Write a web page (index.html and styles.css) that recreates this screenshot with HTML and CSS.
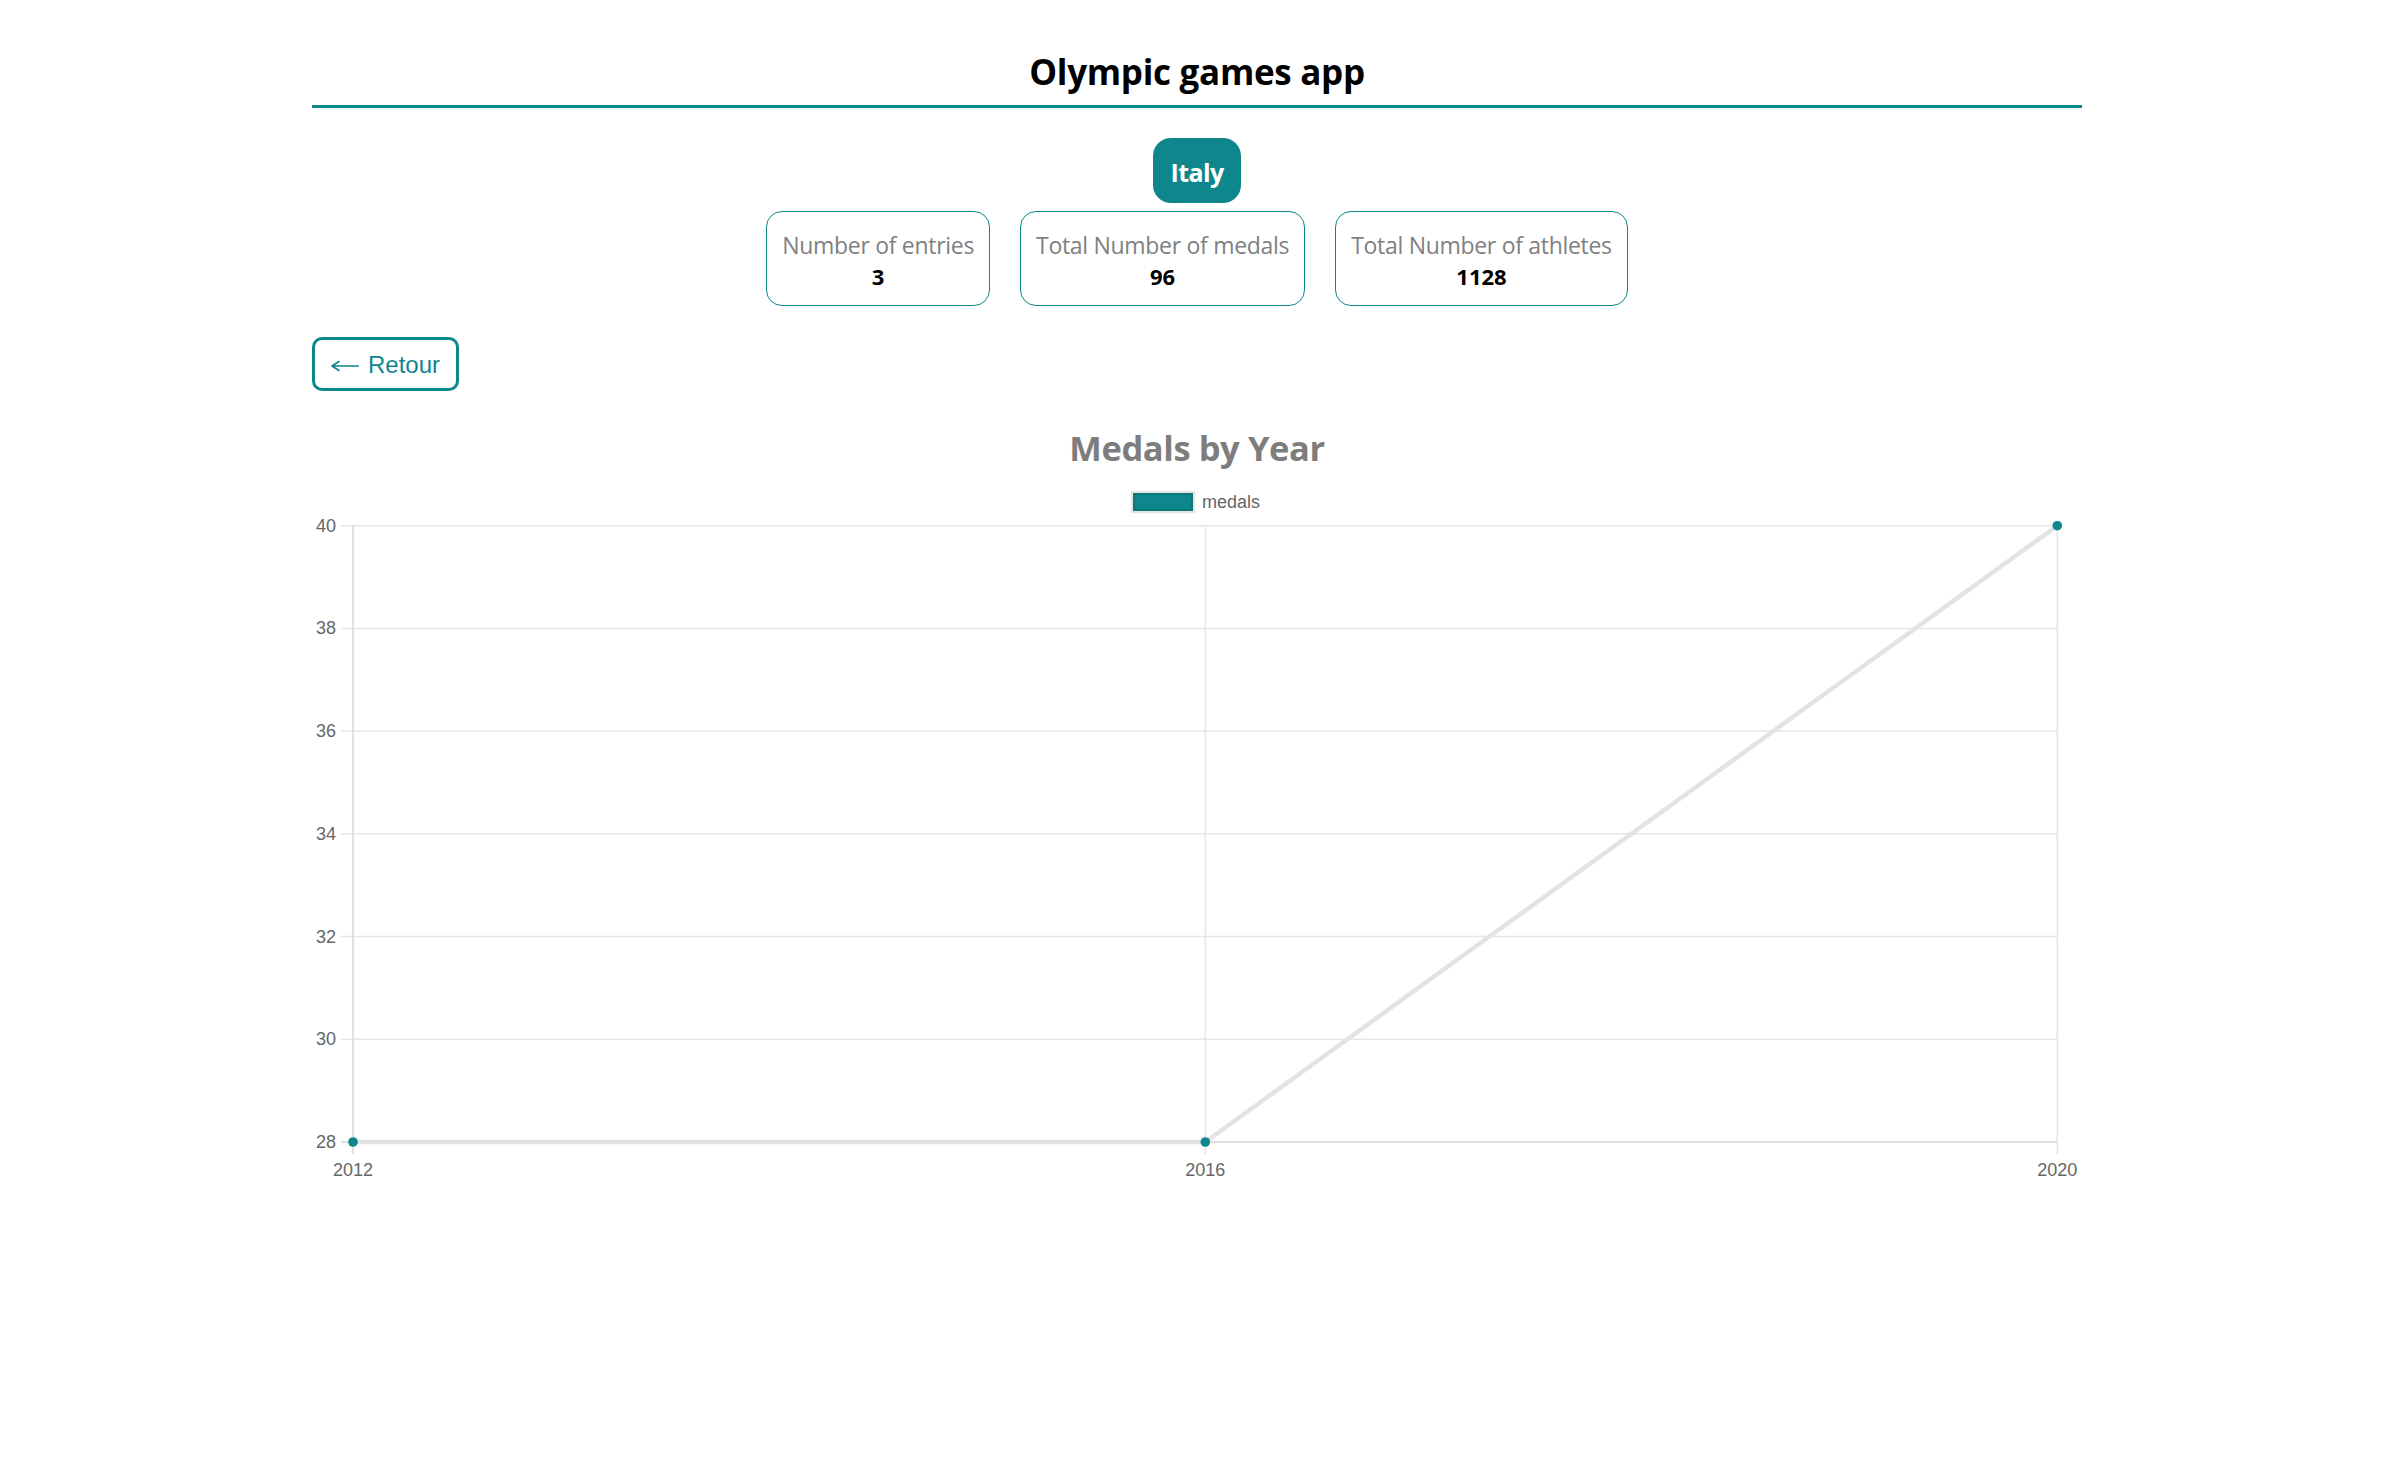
FILE: index.html
```html
<!DOCTYPE html>
<html lang="en">
<head>
<meta charset="utf-8">
<title>Olympic games app</title>
<link rel="stylesheet" href="styles.css">
</head>
<body>
<div class="page">
  <header class="app-header">
    <h1 class="app-title">Olympic games app</h1>
  </header>

  <section class="country">
    <div class="country-badge">Italy</div>
    <div class="stats">
      <div class="stat-card">
        <div class="stat-label">Number of entries</div>
        <div class="stat-value">3</div>
      </div>
      <div class="stat-card">
        <div class="stat-label">Total Number of medals</div>
        <div class="stat-value">96</div>
      </div>
      <div class="stat-card">
        <div class="stat-label">Total Number of athletes</div>
        <div class="stat-value">1128</div>
      </div>
    </div>
  </section>

  <div class="actions">
    <button class="back-btn" type="button" aria-label="← Retour">
      <svg class="back-arrow" width="28" height="12" viewBox="0 0 28 12" aria-hidden="true">
        <path d="M1 6H28M1 6L8 1.5M1 6L8 10.5"></path>
      </svg>
      <span class="back-text">Retour</span>
    </button>
  </div>

  <section class="chart-section">
    <h2 class="chart-title">Medals by Year</h2>
    <svg class="chart" width="1770" height="720" viewBox="0 0 1770 720">
      <rect class="legend-box" x="821" y="22" width="60" height="18"></rect>
      <text class="legend-text" x="890" y="31">medals</text>

      <g class="grid">
        <line x1="29" y1="54.7" x2="1745.3" y2="54.7"></line>
        <line x1="29" y1="157.4" x2="1745.3" y2="157.4"></line>
        <line x1="29" y1="260.1" x2="1745.3" y2="260.1"></line>
        <line x1="29" y1="362.8" x2="1745.3" y2="362.8"></line>
        <line x1="29" y1="465.5" x2="1745.3" y2="465.5"></line>
        <line x1="29" y1="568.2" x2="1745.3" y2="568.2"></line>
        <line x1="893.3" y1="54.7" x2="893.3" y2="683"></line>
        <line x1="1745.3" y1="54.7" x2="1745.3" y2="683"></line>
      </g>
      <g class="axis">
        <line x1="41" y1="54.7" x2="41" y2="683"></line>
        <line x1="29" y1="671" x2="1745.3" y2="671"></line>
      </g>

      <g class="ytick">
        <text x="24" y="54.7">40</text>
        <text x="24" y="157.4">38</text>
        <text x="24" y="260.1">36</text>
        <text x="24" y="362.8">34</text>
        <text x="24" y="465.5">32</text>
        <text x="24" y="568.2">30</text>
        <text x="24" y="671">28</text>
      </g>

      <g class="xtick">
        <text x="41" y="705">2012</text>
        <text x="893.3" y="705">2016</text>
        <text x="1745.3" y="705">2020</text>
      </g>

      <polyline class="data-line" points="41,671 893.3,671 1745.3,54.7"></polyline>
      <circle class="data-point" cx="41" cy="671" r="4.8"></circle>
      <circle class="data-point" cx="893.3" cy="671" r="4.8"></circle>
      <circle class="data-point" cx="1745.3" cy="54.7" r="4.8"></circle>
    </svg>
  </section>
</div>
</body>
</html>
```

FILE: styles.css
```css
html, body {
  margin: 0;
  padding: 0;
  background: #ffffff;
}

body {
  padding-right: 3px;
  font-family: "Open Sans", "Noto Sans", "Liberation Sans", sans-serif;
  color: #000;
}

.page {
  width: 1770px;
  margin: 0 auto;
}

.app-header {
  padding-top: 48px;
  padding-bottom: 9px;
  border-bottom: 3px solid #0d878b;
}

.app-title {
  margin: 0;
  font-size: 35px;
  letter-spacing: -0.3px;
  line-height: 48px;
  font-weight: 700;
  text-align: center;
}

.country {
  display: flex;
  flex-direction: column;
  align-items: center;
  gap: 8px;
  margin-top: 30px;
}

.country-badge {
  background: #0d878b;
  color: #fff;
  font-size: 25px;
  letter-spacing: -0.6px;
  font-weight: 700;
  line-height: 35px;
  padding: 17px 17px 13px;
  border-radius: 18px;
}

.stats {
  display: flex;
  gap: 30px;
}

.stat-card {
  border: 1px solid #0d878b;
  border-radius: 16px;
  padding: 17px 15px 13px;
  text-align: center;
}

.stat-label {
  font-size: 23px;
  letter-spacing: -0.3px;
  line-height: 32px;
  color: #808080;
}

.stat-value {
  font-size: 22px;
  line-height: 31px;
  font-weight: 700;
  color: #000;
}

.actions {
  margin-top: 31px;
}

.back-btn {
  display: inline-flex;
  align-items: center;
  gap: 9px;
  font-family: "Liberation Sans", Arial, sans-serif;
  font-size: 24px;
  line-height: 27px;
  color: #0d878b;
  background: #fff;
  border: 3px solid #0d878b;
  border-radius: 10px;
  padding: 11px 16px 10px;
  cursor: pointer;
}

.back-arrow {
  display: block;
  margin-top: 2px;
}

.back-arrow path {
  fill: none;
  stroke: #0d878b;
  stroke-width: 1.6;
  stroke-linecap: round;
  stroke-linejoin: round;
}

.chart-section {
  margin-top: 33px;
}

.chart-title {
  margin: 0;
  font-size: 34.5px;
  letter-spacing: -0.4px;
  line-height: 47px;
  font-weight: 700;
  color: #7d7d7d;
  text-align: center;
}

.chart {
  display: block;
  font-family: "Liberation Sans", Arial, sans-serif;
  font-size: 18px;
}

.legend-box {
  fill: #0d878b;
  stroke: rgba(0, 0, 0, 0.1);
  stroke-width: 4.5;
}

.legend-text {
  fill: #666;
  dominant-baseline: central;
}

.grid line {
  stroke: #e6e6e6;
  stroke-width: 1.5;
}

.axis line {
  stroke: #d6d6d6;
  stroke-width: 1.5;
}

.ytick text {
  fill: #666;
  text-anchor: end;
  dominant-baseline: central;
}

.xtick text {
  fill: #666;
  text-anchor: middle;
}

.data-line {
  fill: none;
  stroke: #e3e3e3;
  stroke-width: 4.5;
  stroke-linejoin: round;
}

.data-point {
  fill: #0d878b;
}
```
